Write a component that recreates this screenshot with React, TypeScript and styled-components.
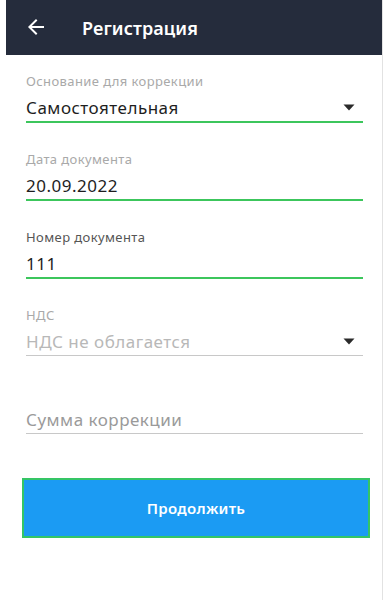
import React from "react";
import styled, { createGlobalStyle } from "styled-components";

const GlobalStyle = createGlobalStyle`
  html, body {
    margin: 0;
    padding: 0;
    background: #ffffff;
  }
  body {
    font-family: "Noto Sans", "Open Sans", Arial, sans-serif;
  }
`;

type FieldData = {
  label?: string;
  value: string;
  active?: boolean;
  muted?: boolean;
  labelDark?: boolean;
  select?: boolean;
};

const fields: FieldData[] = [
  { label: "Основание для коррекции", value: "Самостоятельная", active: true, select: true },
  { label: "Дата документа", value: "20.09.2022", active: true },
  { label: "Номер документа", value: "111", active: true, labelDark: true },
  { label: "НДС", value: "НДС не облагается", muted: true, select: true },
  { value: "Сумма коррекции", muted: true },
];

export default function App() {
  return (
    <>
      <GlobalStyle />
      <StyledFrame>
        <StyledHeader>
          <button className="backBtn" aria-label="back">
            <svg width="24" height="24" viewBox="0 0 24 24">
              <path
                d="M20 11H7.83l5.59-5.59L12 4l-8 8 8 8 1.41-1.41L7.83 13H20v-2z"
                fill="#ffffff"
              />
            </svg>
          </button>
          <h1>Регистрация</h1>
        </StyledHeader>

        <StyledForm>
          {fields.map((f, i) => (
            <StyledField key={i}>
              <StyledLabel $dark={f.labelDark}>{f.label ?? ""}</StyledLabel>
              <StyledValueRow $active={f.active}>
                <StyledValue $muted={f.muted} $placeholder={!f.label}>
                  {f.value}
                </StyledValue>
                {f.select && (
                  <svg width="12" height="7" viewBox="0 0 12 7">
                    <path d="M0.5 0.5h11L6 6.5z" fill="#2a2a2a" />
                  </svg>
                )}
              </StyledValueRow>
            </StyledField>
          ))}

          <StyledSubmit>Продолжить</StyledSubmit>
        </StyledForm>
      </StyledFrame>
    </>
  );
}

const StyledFrame = styled.main`
  margin-left: 6px;
  width: 377px;
  min-height: 600px;
  border-right: 1px solid #e2e2e2;
  box-sizing: border-box;
  background: #ffffff;
`;

const StyledHeader = styled.header`
  height: 55px;
  background: #252c3c;
  display: flex;
  align-items: center;
  padding-left: 18px;

  .backBtn {
    width: 24px;
    height: 24px;
    padding: 0;
    border: none;
    background: transparent;
    display: flex;
    align-items: center;
    justify-content: center;
    margin-top: -1px;
  }

  h1 {
    margin: 0 0 0 34px;
    font-size: 18px;
    font-weight: 600;
    color: #ffffff;
    letter-spacing: 0.1px;
  }
`;

const StyledForm = styled.section`
  padding: 18px 19px 0 20px;
  display: flex;
  flex-direction: column;
`;

const StyledField = styled.div`
  display: flex;
  flex-direction: column;
  margin-bottom: 28px;
`;

const StyledLabel = styled.div<{ $dark?: boolean }>`
  height: 16px;
  line-height: 16px;
  font-size: 13px;
  letter-spacing: 0.4px;
  color: ${(p) => (p.$dark ? "#555555" : "#a9a9a9")};
  margin-bottom: 8px;
`;

const StyledValueRow = styled.div<{ $active?: boolean }>`
  display: flex;
  align-items: center;
  justify-content: space-between;
  height: 22px;
  padding: 0 8px 2px 0;
  border-bottom: ${(p) => (p.$active ? "2px solid #3cc65c" : "1px solid #c8c8c8")};
  margin-bottom: ${(p) => (p.$active ? "0" : "1px")};

  svg {
    margin-top: -2px;
  }
`;

const StyledValue = styled.span<{ $muted?: boolean; $placeholder?: boolean }>`
  font-size: 17px;
  line-height: 22px;
  letter-spacing: 0.5px;
  color: ${(p) => (p.$placeholder ? "#9a9a9a" : p.$muted ? "#b8b8b8" : "#1e1e1e")};
`;

const StyledSubmit = styled.button`
  margin: 15px -7px 0 -4px;
  height: 60px;
  background: #1b9bf3;
  border: 2px solid #35c565;
  color: #ffffff;
  font-family: "Noto Sans", "Open Sans", Arial, sans-serif;
  font-size: 15px;
  font-weight: 600;
  letter-spacing: 0.3px;
`;
